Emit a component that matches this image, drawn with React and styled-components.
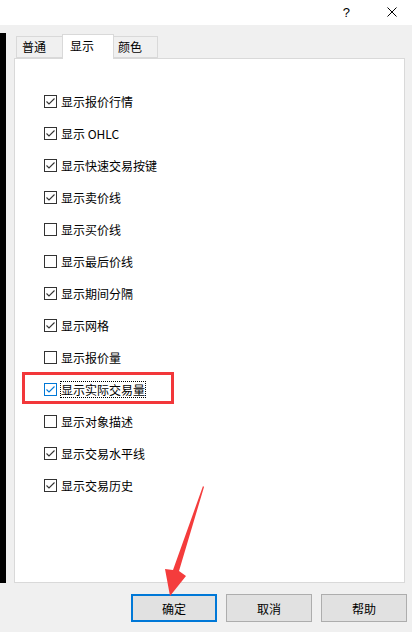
import React from 'react';
import styled, { createGlobalStyle } from 'styled-components';

const GlobalStyle = createGlobalStyle`
  html, body { margin: 0; padding: 0; }
  body {
    font-family: "Noto Sans CJK SC", "Microsoft YaHei", sans-serif;
    font-size: 12px;
    color: #000;
    background: #f0f0f0;
  }
`;

const Window = styled.div`
  position: relative;
  width: 412px;
  height: 632px;
  background: #f0f0f0;
  display: flex;
  flex-direction: column;
  overflow: hidden;
`;

const TitleBar = styled.div`
  height: 25px;
  background: #fff;
  display: flex;
  align-items: center;
  justify-content: flex-end;
  gap: 37px;
  padding-right: 15px;
`;

const HelpGlyph = styled.span`
  font-family: "Liberation Sans", Arial, sans-serif;
  font-size: 13px;
  line-height: 13px;
  color: #000;
  margin-top: -1px;
`;

const CloseIcon = styled.svg`
  width: 10px;
  height: 10px;
  display: block;
  margin-top: -1px;
`;

const MainRow = styled.div`
  display: flex;
  margin-top: 8px;
  height: 550px;
`;

const SideStrip = styled.div`
  width: 6px;
  background: #000;
`;

const TabControl = styled.div`
  margin-left: 8px;
  margin-top: 1px;
  width: 391px;
  display: flex;
  flex-direction: column;
`;

const TabRow = styled.div`
  display: flex;
  align-items: flex-end;
  height: 24px;
  padding-left: 2px;
  position: relative;
  z-index: 2;
`;

const Tab = styled.div`
  box-sizing: border-box;
  width: ${p => p.$w}px;
  height: ${p => (p.$active ? 25 : 22)}px;
  margin-left: ${p => (p.$first ? 0 : -1)}px;
  margin-bottom: ${p => (p.$active ? -1 : 0)}px;
  padding-left: ${p => p.$pl}px;
  padding-bottom: ${p => (p.$active ? 3 : 0)}px;
  border: 1px solid #d9d9d9;
  border-bottom: ${p => (p.$active ? 'none' : '1px solid #d9d9d9')};
  background: ${p => (p.$active ? '#fff' : '#f0f0f0')};
  position: relative;
  z-index: ${p => (p.$active ? 2 : 1)};
  display: flex;
  align-items: center;
  line-height: 16px;
`;

const Panel = styled.div`
  flex: 1;
  background: #fff;
  border: 1px solid #d9d9d9;
  padding: 26px 0 0 29px;
  position: relative;
  z-index: 1;
`;

const Row = styled.div`
  position: relative;
  height: 32px;
  display: flex;
  align-items: center;
  gap: 3px;

  &::before {
    content: '';
    display: ${p => (p.$marked ? 'block' : 'none')};
    position: absolute;
    left: -22px;
    top: -1px;
    width: 152px;
    height: 32px;
    box-sizing: border-box;
    border: 3px solid #f2373a;
  }
`;

const Box = styled.span`
  box-sizing: border-box;
  width: 13px;
  height: 13px;
  border: 1px solid ${p => (p.$focus ? '#0078d7' : '#333')};
  background: #fff;
  display: flex;
  align-items: center;
  justify-content: center;
`;

const Label = styled.span`
  border: 1px dotted ${p => (p.$focus ? '#000' : 'transparent')};
  padding: 0 0 0 0;
  line-height: 15px;
  white-space: nowrap;
`;

const Footer = styled.div`
  display: flex;
  justify-content: flex-end;
  gap: 9px;
  padding: 11px 5px 0 0;
`;

const Button = styled.button`
  box-sizing: border-box;
  width: 86px;
  height: 28px;
  background: #e1e1e1;
  border: ${p => (p.$primary ? '2px solid #0078d7' : '1px solid #adadad')};
  font-family: inherit;
  font-size: 12px;
  color: #000;
  padding: 0;
  margin: 0;
`;

const Overlay = styled.svg`
  position: absolute;
  left: 0;
  top: 0;
  width: 412px;
  height: 632px;
  pointer-events: none;
  z-index: 10;
`;

const items = [
  ['显示报价行情', true],
  ['显示 OHLC', true],
  ['显示快速交易按键', true],
  ['显示卖价线', true],
  ['显示买价线', false],
  ['显示最后价线', false],
  ['显示期间分隔', true],
  ['显示网格', true],
  ['显示报价量', false],
  ['显示实际交易量', true, true],
  ['显示对象描述', false],
  ['显示交易水平线', true],
  ['显示交易历史', true],
];

function Check({ checked, focus }) {
  return (
    <Box $focus={focus}>
      {checked && (
        <svg width="11" height="11" viewBox="0 0 11 11">
          <polyline
            points="1.5,5.5 4,8 9.5,2.5"
            fill="none"
            stroke={focus ? '#0078d7' : '#333'}
            strokeWidth="1.1"
          />
        </svg>
      )}
    </Box>
  );
}

export default function App() {
  return (
    <>
      <GlobalStyle />
      <Window>
        <TitleBar>
          <HelpGlyph>?</HelpGlyph>
          <CloseIcon viewBox="0 0 10 10">
            <path d="M0.5 0.5 L9.5 9.5 M9.5 0.5 L0.5 9.5" stroke="#000" strokeWidth="1" fill="none" />
          </CloseIcon>
        </TitleBar>
        <MainRow>
          <SideStrip />
          <TabControl>
            <TabRow>
              <Tab $first $w={47} $pl={5}>普通</Tab>
              <Tab $active $w={52} $pl={7}>显示</Tab>
              <Tab $w={45} $pl={4}>颜色</Tab>
            </TabRow>
            <Panel>
              {items.map(([text, checked, focus]) => (
                <Row key={text} $marked={focus}>
                  <Check checked={checked} focus={focus} />
                  <Label $focus={focus}>{text}</Label>
                </Row>
              ))}
            </Panel>
          </TabControl>
        </MainRow>
        <Footer>
          <Button $primary>确定</Button>
          <Button>取消</Button>
          <Button>帮助</Button>
        </Footer>
        <Overlay viewBox="0 0 412 632">
          <polygon
            points="203,486 204,487 179,571 186,576 170,596 165,569 173,570"
            fill="#f43c3c"
          />
        </Overlay>
      </Window>
    </>
  );
}
